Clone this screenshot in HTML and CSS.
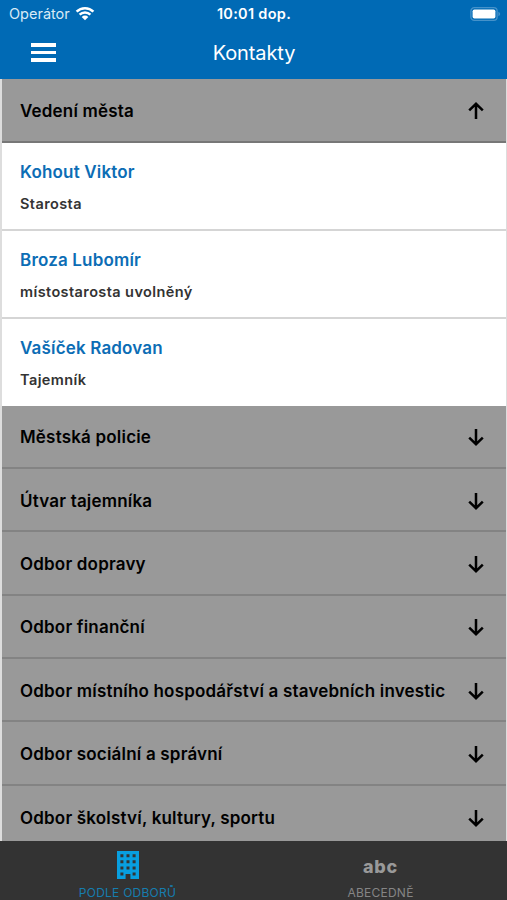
FILE: index.html
```html
<!DOCTYPE html>
<html lang="cs">
<head>
    <meta charset="UTF-8">
    <meta name="viewport" content="width=device-width, initial-scale=1.0">
    <title>Kontakty</title>
    <link rel="stylesheet" href="styles.css">
</head>
<body>
    <svg width="0" height="0" class="defs">
        <symbol id="arrow" viewBox="0 0 18 20">
            <path d="M9 2V17.5M2.2 10.6L9 17.2L15.8 10.6" fill="none" stroke="#000" stroke-width="2.5"/>
        </symbol>
    </svg>

    <header>
        <div class="statusbar">
            <div class="carrier">
                <span>Operátor</span>
                <svg class="wifi" width="20" height="15" viewBox="0 0 20 15">
                    <path d="M1.6 5.6A12 12 0 0 1 18.4 5.6M4.6 8.7A7.8 7.8 0 0 1 15.4 8.7" fill="none" stroke="#fff" stroke-width="2.5"/>
                    <path d="M10 14.2L6.7 10.9A4.7 4.7 0 0 1 13.3 10.9Z" fill="#fff"/>
                </svg>
            </div>
            <div class="time">10:01 dop.</div>
            <div class="battery">
                <svg width="31" height="14" viewBox="0 0 31 14">
                    <rect x="0.9" y="0.7" width="26.2" height="12.6" rx="3.4" fill="none" stroke="#4592ca" stroke-width="1.3"/>
                    <rect x="2.6" y="2.4" width="22.8" height="9.2" rx="1.8" fill="#fff"/>
                    <path d="M28.4 4.8Q30.2 5.6 30.2 7T28.4 9.2Z" fill="#4592ca"/>
                </svg>
            </div>
        </div>
        <div class="navbar">
            <button type="button" class="menu-btn" aria-label="Menu">
                <span></span>
                <span></span>
                <span></span>
            </button>
            <h1>Kontakty</h1>
        </div>
    </header>

    <main>
        <div class="group open">
            <h2>Vedení města</h2>
            <svg class="arrow"><use href="#arrow"/></svg>
        </div>
        <div class="contact">
            <a class="name">Kohout Viktor</a>
            <p>Starosta</p>
        </div>
        <div class="contact">
            <a class="name">Broza Lubomír</a>
            <p>místostarosta uvolněný</p>
        </div>
        <div class="contact last">
            <a class="name">Vašíček Radovan</a>
            <p>Tajemník</p>
        </div>
        <div class="group">
            <h2>Městská policie</h2>
            <svg class="arrow"><use href="#arrow"/></svg>
        </div>
        <div class="group">
            <h2>Útvar tajemníka</h2>
            <svg class="arrow"><use href="#arrow"/></svg>
        </div>
        <div class="group">
            <h2>Odbor dopravy</h2>
            <svg class="arrow"><use href="#arrow"/></svg>
        </div>
        <div class="group">
            <h2>Odbor finanční</h2>
            <svg class="arrow"><use href="#arrow"/></svg>
        </div>
        <div class="group">
            <h2>Odbor místního hospodářství a stavebních investic</h2>
            <svg class="arrow"><use href="#arrow"/></svg>
        </div>
        <div class="group">
            <h2>Odbor sociální a správní</h2>
            <svg class="arrow"><use href="#arrow"/></svg>
        </div>
        <div class="group">
            <h2>Odbor školství, kultury, sportu</h2>
            <svg class="arrow"><use href="#arrow"/></svg>
        </div>
    </main>

    <nav class="tabs">
        <a class="tab active">
            <svg class="tab-icon" width="22" height="28" viewBox="0 0 22 28">
                <path fill="#089fe0" fill-rule="evenodd" d="M0 0H22V28H13.4V23H8.6V28H0ZM3.4 3.2V6.2H6.4V3.2ZM9.5 3.2V6.2H12.5V3.2ZM15.6 3.2V6.2H18.6V3.2ZM3.4 9.3V12.3H6.4V9.3ZM9.5 9.3V12.3H12.5V9.3ZM15.6 9.3V12.3H18.6V9.3ZM3.4 15.4V18.4H6.4V15.4ZM9.5 15.4V18.4H12.5V15.4ZM15.6 15.4V18.4H18.6V15.4ZM3.4 21.5V24.5H6.4V21.5ZM15.6 21.5V24.5H18.6V21.5Z"/>
            </svg>
            <span>PODLE ODBORŮ</span>
        </a>
        <a class="tab">
            <span class="tab-icon abc">abc</span>
            <span>ABECEDNĚ</span>
        </a>
    </nav>
</body>
</html>
```

FILE: styles.css
```css
* {
    box-sizing: border-box;
}

body {
    margin: 0;
    height: 900px;
    display: flex;
    flex-direction: column;
    overflow: hidden;
    font-family: Inter, "Liberation Sans", sans-serif;
    background-color: #fff;
}

.defs {
    position: absolute;
}

header {
    flex: none;
    height: 79px;
    background-color: #006ab5;
    color: #fff;
}

.statusbar {
    display: grid;
    grid-template-columns: 1fr auto 1fr;
    align-items: center;
    height: 27px;
    padding: 0 6px 0 9px;
    font-size: 14.5px;
}

.carrier {
    display: flex;
    align-items: center;
    gap: 5px;
    color: #d9eaf6;
}

.time {
    padding-right: 2px;
    font-weight: 600;
    letter-spacing: 0.3px;
}

.battery {
    display: flex;
    justify-content: flex-end;
}

.navbar {
    display: grid;
    grid-template-columns: 1fr auto 1fr;
    align-items: center;
    height: 51px;
    padding: 0 30px 0 31px;
}

.menu-btn {
    display: flex;
    flex-direction: column;
    gap: 4px;
    width: 25px;
    padding: 0;
    border: none;
    background: none;
}

.menu-btn span {
    height: 3.5px;
    background-color: #fff;
}

h1 {
    margin: 0;
    font-size: 20px;
    font-weight: 400;
    letter-spacing: -0.1px;
}

main {
    flex: 1;
    min-height: 0;
    overflow: hidden;
    border-left: 2px solid #ddd;
    border-right: 1px solid #ddd;
}

.group {
    display: flex;
    align-items: center;
    justify-content: space-between;
    height: 63.4px;
    padding: 2px 21.5px 0 18px;
    background-color: #999;
    border-bottom: 2px solid #838383;
}

.group.open {
    height: 64px;
    border-bottom-color: #777;
}

.group.open .arrow {
    transform: rotate(180deg);
}

h2 {
    margin: 0;
    font-size: 17px;
    font-weight: 600;
    letter-spacing: 0.19px;
    color: #000;
    white-space: nowrap;
}

.arrow {
    flex: none;
    width: 18px;
    height: 20px;
}

.contact {
    height: 88px;
    padding: 18px 18px 0;
    border-bottom: 2px solid #d5d5d5;
}

.contact.last {
    height: 86.5px;
    padding-top: 17.5px;
    border-bottom: none;
}

.name {
    display: block;
    font-size: 17px;
    line-height: 22px;
    font-weight: 600;
    letter-spacing: 0.17px;
    color: #0c6db5;
}

.contact p {
    margin: 11px 0 0;
    font-size: 14.5px;
    line-height: 19px;
    font-weight: 600;
    letter-spacing: 0.4px;
    color: #333;
}

.tabs {
    flex: none;
    display: flex;
    height: 59px;
    background-color: #333;
}

.tab {
    flex: 1;
    display: flex;
    flex-direction: column;
    align-items: center;
    padding-top: 10px;
    font-size: 12px;
    line-height: 15px;
    letter-spacing: 0.25px;
    color: #858585;
}

.tab-icon {
    height: 28px;
    margin-bottom: 6px;
}

.tab.active {
    color: #167daf;
    padding-left: 1px;
}

.abc {
    font-size: 18px;
    line-height: 32px;
    font-weight: 800;
    letter-spacing: 0.7px;
    color: #999;
}
```
